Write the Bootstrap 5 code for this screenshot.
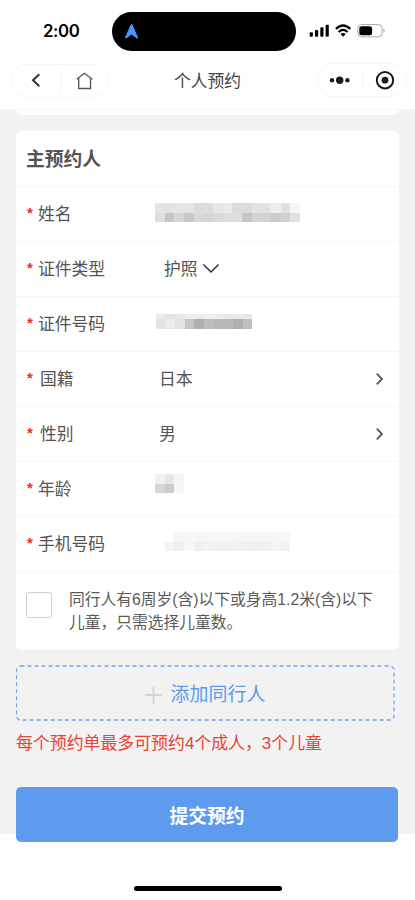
<!DOCTYPE html>
<html lang="zh-CN">
<head>
<meta charset="utf-8">
<meta name="viewport" content="width=device-width, initial-scale=1">
<title>个人预约</title>
<link href="https://cdn.jsdelivr.net/npm/bootstrap@5.3.0/dist/css/bootstrap.min.css" rel="stylesheet">
<style>
body{font-family:"Liberation Sans","Noto Sans CJK SC",sans-serif;color:#545454;font-size:16.8px;line-height:24px;background:#fff}
svg{display:block;flex-shrink:0}
.phone{width:415px;height:900px}
.statusbar{height:62px;padding:12px 0 0 43px}
.clock{width:69px;font-family:Inter,sans-serif;font-size:16.8px;font-weight:600;color:#000;line-height:38px;letter-spacing:-.4px;flex-shrink:0}
.island{width:184px;height:39px;background:#000;padding-left:12px;flex-shrink:0}
.status-icons{margin:10px 0 0 8px}
.titlebar{height:47px;padding:0 8px 0 11px}
.capsule{border:1px solid #f5f5f5;height:34px}
.capsule-left{width:98px;margin-top:2px}
.capsule-right{width:90px;margin-top:1px}
.page-title{font-size:16.8px;color:#444;padding-top:8px;padding-right:11px}
.page-main{height:725px;background:#f2f2f2;padding:0 16px}
.prev-card{height:6px;border-top:1px solid #f5f5f5;border-radius:0 0 5px 5px}
.panel{margin-top:16px;height:519px;border-radius:5px}
.panel-title{height:56px;font-size:18.8px;font-weight:700;padding:2px 0 0 10px;border-bottom:1px solid #f6f6f6}
.field{height:55px;border-bottom:1px solid #f7f7f7}
.field-label{width:139px;padding:2px 0 0 11px}
.star{width:11px;color:#f12b20;font-size:15px;font-weight:700;line-height:20px}
.star-wide{width:13px}
.field-value{padding:2px 0 0 4px}
.type-value{padding:2px 4px 0 9px}
.box{width:26px;height:26px;border:1px solid #d0d0d0;border-radius:3px;margin:20px 0 0 10px}
.note{font-size:15.75px;line-height:23px;color:#5a5a5a;padding:16px 0 0 17px}
.add-btn{margin-top:15px;width:379px;height:56px;color:#5c9aef;font-size:19px}
.add-btn .outline{left:0;top:0}
.add-text{padding-top:3px}
.limit{color:#ea4136;font-size:16.9px;margin-top:11px}
.submit{margin-top:31px;width:382px;height:55px;flex-shrink:0;background:#5e9bef;border-radius:5px;font-size:18.8px;font-weight:700;line-height:24px}
.home-line{width:148px;height:5px;background:#000;margin-top:52px}
</style>
<script src="https://cdn.jsdelivr.net/npm/bootstrap@5.3.0/dist/js/bootstrap.bundle.min.js"></script>
</head>
<body>
<div class="phone d-flex flex-column overflow-hidden">
  <header>
    <div class="statusbar d-flex">
      <div class="clock">2:00</div>
      <div class="island rounded-pill d-flex align-items-center">
        <svg width="16" height="17" viewBox="0 0 16 17"><path d="M6.500 2Q7.600-.1 8.700 2L14 14.500Q13.900 16 12.500 15.300L7.600 11.600L2.500 15.300Q1 16 1 14.500Z" fill="#4b96f8"/></svg>
      </div>
      <svg class="status-icons" width="84" height="18" viewBox="304 22 84 18">
        <g fill="#000"><rect x="309.700" y="32.300" width="3.200" height="4.500" rx="1"/><rect x="315" y="30" width="3.200" height="6.800" rx="1"/><rect x="320.300" y="27.300" width="3.200" height="9.500" rx="1"/><rect x="325.600" y="24.700" width="3.200" height="12.100" rx="1"/></g>
        <g fill="none" stroke="#000" stroke-width="2.300"><path d="M335.900 28.900Q343.100 22 350.300 28.900"/><path d="M338.600 32Q343.100 27.800 347.600 32"/></g>
        <path d="M340.400 34Q343.100 31.900 345.800 34L343.100 36.800Z"/>
        <rect x="357.800" y="24.600" width="24.400" height="12.300" rx="3.800" fill="none" stroke="#aaa"/>
        <rect x="359.300" y="26.200" width="12.800" height="9.100" rx="2.500"/>
        <path d="M383.500 28.800Q386 30.700 383.500 32.700Z" fill="#aaa"/>
      </svg>
    </div>
    <div class="titlebar d-flex justify-content-between">
      <div class="capsule capsule-left rounded-pill">
        <svg width="96" height="32" viewBox="12 65 96 32" fill="none"><path d="M39.300 74.300L33 80.200L39.300 86.200" stroke="#333" stroke-width="2"/><path d="M60.500 71V92" stroke="#f3f3f3"/><path d="M76.700 79.200L84.400 73.300L92.300 79.200M78.700 78V88.500H90.500V78" stroke="#555" stroke-width="1.300"/></svg>
      </div>
      <div class="page-title">个人预约</div>
      <div class="capsule capsule-right rounded-pill">
        <svg width="88" height="32" viewBox="318 64 88 32"><g fill="#1b1b1b"><circle cx="332" cy="80.200" r="2.200"/><circle cx="339.700" cy="80.200" r="3.700"/><circle cx="347.400" cy="80.200" r="2.200"/><circle cx="385" cy="80.200" r="3.400"/></g><circle cx="385" cy="80.200" r="8.200" fill="none" stroke="#1b1b1b" stroke-width="2"/><path d="M362.500 70V91" stroke="#f3f3f3"/></svg>
      </div>
    </div>
  </header>
  <main class="page-main d-flex flex-column">
    <div class="prev-card bg-white flex-shrink-0"></div>
    <section class="panel bg-white flex-shrink-0">
      <div class="panel-title d-flex align-items-center">主预约人</div>
      <div class="field d-flex align-items-center">
        <div class="field-label d-flex"><span class="star">*</span><span>姓名</span></div>
        <svg class="mosaic" data-x="0" data-y="16" data-rows="e4e2e5e5dadde7eadcdce3e3efe1f5,dfc5d6c7d7d5d9dfdfc6d3d3ccd1e0" width="150" height="54"></svg>
      </div>
      <div class="field d-flex align-items-center">
        <div class="field-label d-flex"><span class="star">*</span><span>证件类型</span></div>
        <span class="type-value">护照</span>
        <svg width="18" height="12" viewBox="0 0 18 12" fill="none"><path d="M1.400 1.500L9 9L16.600 1.500" stroke="#333340" stroke-width="1.600"/></svg>
      </div>
      <div class="field d-flex align-items-center">
        <div class="field-label d-flex"><span class="star">*</span><span>证件号码</span></div>
        <svg class="mosaic" data-x="0.500" data-y="17" data-h="5" data-rows="ebe3e7eeeeefefe9e9e9,e3ebe3c5b0bdb9b8b0bf" width="150" height="54"></svg>
      </div>
      <div class="field d-flex align-items-center">
        <div class="field-label d-flex"><span class="star star-wide">*</span><span>国籍</span></div>
        <span class="field-value">日本</span>
        <svg class="ms-auto me-3" width="7" height="12" viewBox="0 0 7 12" fill="none"><path d="M.8 .7L6 6L.8 11.300" stroke="#555" stroke-width="1.800"/></svg>
      </div>
      <div class="field d-flex align-items-center">
        <div class="field-label d-flex"><span class="star star-wide">*</span><span>性别</span></div>
        <span class="field-value">男</span>
        <svg class="ms-auto me-3" width="7" height="12" viewBox="0 0 7 12" fill="none"><path d="M.8 .7L6 6L.8 11.300" stroke="#555" stroke-width="1.800"/></svg>
      </div>
      <div class="field d-flex align-items-center">
        <div class="field-label d-flex"><span class="star">*</span><span>年龄</span></div>
        <svg class="mosaic" data-x="0" data-y="12" data-rows="f0e7f5,d6cbf6" width="150" height="54"></svg>
      </div>
      <div class="field d-flex align-items-center">
        <div class="field-label d-flex"><span class="star">*</span><span>手机号码</span></div>
        <svg class="mosaic" data-x="9.700" data-y="15" data-rows="fff6f7f6f6f8f7f6f6f5f6f6f7,f3eff8eff3f1f1f3f1eff1f4f1" width="150" height="54"></svg>
      </div>
      <div class="d-flex">
        <span class="box flex-shrink-0"></span>
        <div class="note text-nowrap">同行人有6周岁(含)以下或身高1.2米(含)以下<br>儿童，只需选择儿童数。</div>
      </div>
    </section>
    <div class="add-btn position-relative d-flex align-items-center justify-content-center flex-shrink-0">
      <svg class="outline position-absolute" width="379" height="56" fill="none"><rect x=".500" y="1" width="377.500" height="54" rx="4" stroke="#70a7f2" stroke-width="1.300" stroke-dasharray="4 3"/></svg>
      <svg class="me-2 mt-1" width="17" height="18" viewBox="0 0 17 18"><path d="M0 9H17M8.500 .5V17.500" stroke="#d5d5d5" stroke-width="2"/></svg>
      <span class="add-text">添加同行人</span>
    </div>
    <div class="limit text-nowrap">每个预约单最多可预约4个成人，3个儿童</div>
    <button class="submit btn border-0 text-white p-0 pt-1">提交预约</button>
  </main>
  <div class="home-line rounded-pill mx-auto flex-shrink-0"></div>
</div>
<script>
// Paint the masked values: each pair of hex digits is the grey level of one cell
document.querySelectorAll('.mosaic').forEach(svg => {
  const d = svg.dataset, cell = 9.67, firstH = +(d.h || cell);
  d.rows.split(',').forEach((row, r) => {
    row.match(/../g).forEach((g, i) => {
      const rect = document.createElementNS('http://www.w3.org/2000/svg', 'rect');
      const attrs = {x: +d.x + i * cell, y: +d.y + (r ? firstH : 0), width: cell, height: r ? cell : firstH, fill: '#' + g + g + g, 'shape-rendering': 'crispEdges'};
      for (const k in attrs) rect.setAttribute(k, attrs[k]);
      svg.appendChild(rect);
    });
  });
});
</script>
</body>
</html>
